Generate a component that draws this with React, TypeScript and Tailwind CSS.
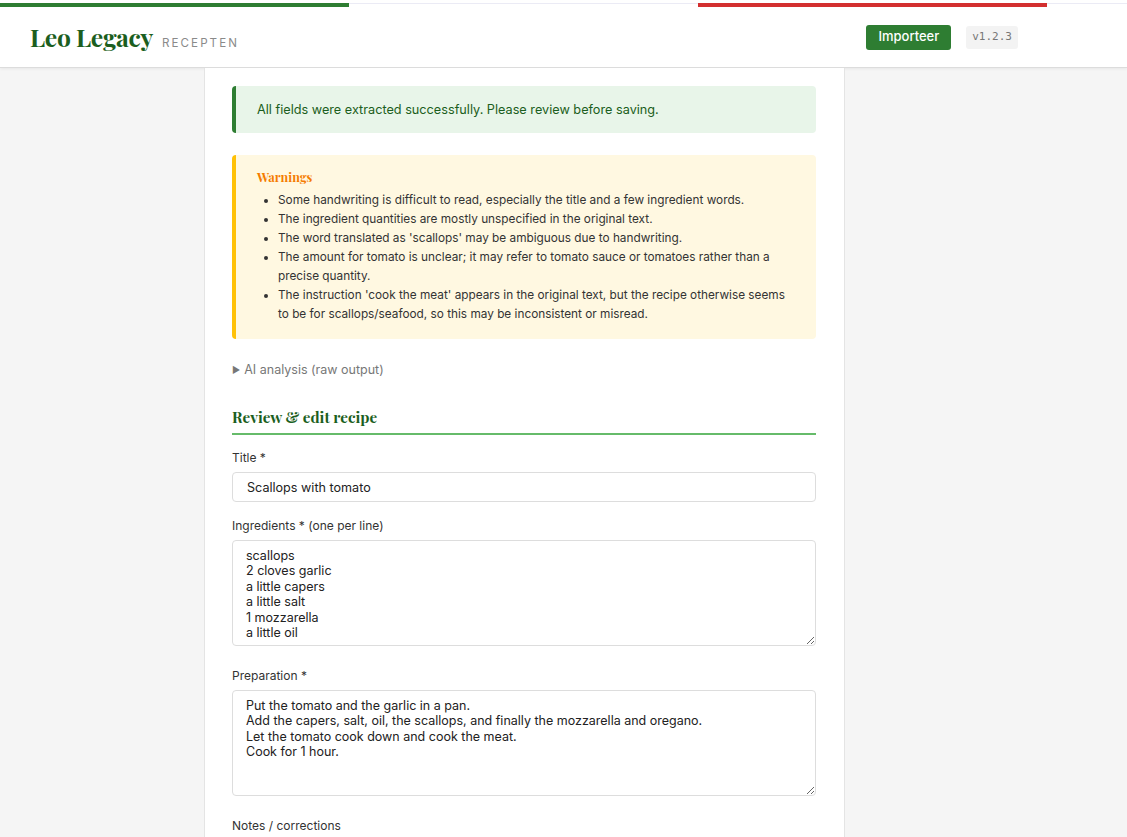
import { useState } from 'react';

const warnings = [
  'Some handwriting is difficult to read, especially the title and a few ingredient words.',
  'The ingredient quantities are mostly unspecified in the original text.',
  "The word translated as 'scallops' may be ambiguous due to handwriting.",
  'The amount for tomato is unclear; it may refer to tomato sauce or tomatoes rather than a precise quantity.',
  "The instruction 'cook the meat' appears in the original text, but the recipe otherwise seems to be for scallops/seafood, so this may be inconsistent or misread.",
];

const serif = "font-['Playfair_Display','Liberation_Serif','DejaVu_Serif',serif]";

export default function App() {
  const [title, setTitle] = useState('Scallops with tomato');
  const [ingredients, setIngredients] = useState(
    'scallops\n2 cloves garlic\na little capers\na little salt\n1 mozzarella\na little oil\noregano\ntomato'
  );
  const [preparation, setPreparation] = useState(
    'Put the tomato and the garlic in a pan.\nAdd the capers, salt, oil, the scallops, and finally the mozzarella and oregano.\nLet the tomato cook down and cook the meat.\nCook for 1 hour.'
  );

  return (
    <div className="min-h-screen bg-[#f5f5f5] font-['Inter','Liberation_Sans',sans-serif] text-[#333]">
      {/* Header */}
      <header className="bg-white border-b border-[#dcdcdc] shadow-[0_1px_3px_rgba(0,0,0,0.06)]">
        <div className="pt-[3px] flex h-[7px]">
          <div className="w-[349px] h-[4px] bg-[#2e7d32]" />
          <div className="w-[349px] h-[4px] border-t border-[#ebebf5]" />
          <div className="w-[349px] h-[4px] bg-[#d32f2f]" />
          <div className="flex-1 h-[4px] border-t border-[#ebebf5]" />
        </div>
        <div className="flex items-center justify-between h-[60px] pl-[30px] pr-[109px]">
          <div className="flex items-baseline gap-[9px]">
            <span className={`${serif} text-[24.7px] font-bold text-[#1b5e20] tracking-[-0.3px]`}>
              Leo Legacy
            </span>
            <span className="text-[11.6px] tracking-[0.18em] text-[#8a8a8a]">RECEPTEN</span>
          </div>
          <div className="flex items-center gap-[15px]">
            <button className="h-[25px] px-[12px] rounded-[3px] bg-[#2e7d32] text-white text-[13px] font-medium">
              Importeer
            </button>
            <span className="h-[23px] px-[6px] flex items-center rounded-[3px] bg-[#f3f3f3] text-[#777] text-[11px] font-['DejaVu_Sans_Mono',monospace]">
              v1.2.3
            </span>
          </div>
        </div>
      </header>

      {/* Main card */}
      <main className="w-[641px] ml-[204px] bg-white border-x border-[#e4e4e4] min-h-[770px] pl-[27px] pr-[28px] pt-[18px] pb-10">
        <div className="h-[47px] flex items-center bg-[#e8f5e9] border-l-4 border-[#2e7d32] rounded-[4px] pl-[21px] text-[12.7px] text-[#1b5e20]">
          All fields were extracted successfully. Please review before saving.
        </div>

        <div className="mt-[22px] bg-[#fff8e1] border-l-4 border-[#ffc107] rounded-[4px] pl-[21px] pr-[21px] pt-[14px] pb-[15px]">
          <h3 className={`${serif} text-[12.5px] font-bold text-[#f57c00] leading-[16px]`}>Warnings</h3>
          <ul className="list-disc pl-[21px] mt-[6px] text-[11.8px] leading-[19px] text-[#333]">
            {warnings.map((w) => (
              <li key={w}>{w}</li>
            ))}
          </ul>
        </div>

        <div className="mt-[22px] text-[12.5px] text-[#777] leading-[18px] flex items-center gap-[4px]">
          <span className="text-[9px]">▶</span>
          <span>AI analysis (raw output)</span>
        </div>

        <h2 className={`${serif} mt-[28px] text-[15.3px] font-bold text-[#1b5e20] leading-[20px] pb-[6px] border-b-2 border-[#66bb6a]`}>
          Review &amp; edit recipe
        </h2>

        <label className="block mt-[15px] text-[12px] leading-[16px] mb-[6px]">Title *</label>
        <input
          value={title}
          onChange={(e) => setTitle(e.target.value)}
          className="block w-full h-[30px] border border-[#dddddd] rounded-[4px] px-[14px] text-[12.6px] text-[#222] outline-none"
        />

        <label className="block mt-[16px] text-[12px] leading-[16px] mb-[6px]">Ingredients * (one per line)</label>
        <textarea
          value={ingredients}
          onChange={(e) => setIngredients(e.target.value)}
          className="block w-full h-[106px] border border-[#dddddd] rounded-[4px] px-[13px] pt-[7px] pb-0 text-[12.5px] leading-[15.4px] text-[#222] outline-none"
        />

        <label className="block mt-[22px] text-[12px] leading-[16px] mb-[6px]">Preparation *</label>
        <textarea
          value={preparation}
          onChange={(e) => setPreparation(e.target.value)}
          className="block w-full h-[106px] border border-[#dddddd] rounded-[4px] px-[13px] pt-[7px] pb-0 text-[12.5px] leading-[15.4px] text-[#222] outline-none"
        />

        <label className="block mt-[22px] text-[12px] leading-[16px] mb-[6px]">Notes / corrections</label>
        <textarea className="block w-full h-[80px] border border-[#dddddd] rounded-[4px] px-[13px] py-[7px] text-[12.5px] outline-none" />
      </main>
    </div>
  );
}
